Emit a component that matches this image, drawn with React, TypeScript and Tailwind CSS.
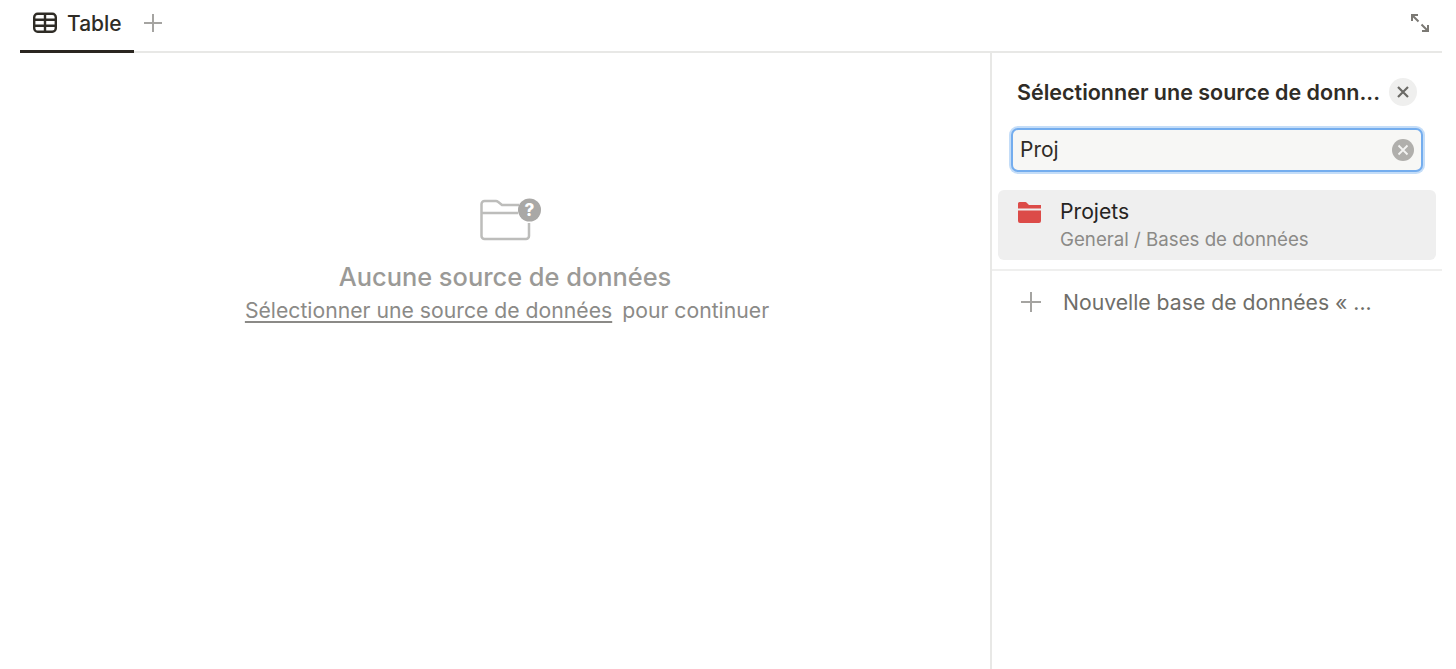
export default function App() {
  return (
    <div className="h-[669px] w-[1456px] overflow-hidden bg-white pl-[20px] pr-[14px] font-['Inter',sans-serif] flex flex-col">
      <div className="h-[53px] shrink-0 flex justify-between border-b-2 border-[#e8e8e6]">
        <div className="flex h-[53px] items-start">
          <div className="h-[53px] w-[114px] border-b-[3px] border-[#2a2620] flex items-start pl-[13px] pt-[11px] gap-[10px]">
            <svg width="24" height="24" viewBox="0 0 24 24" fill="none" stroke="#2f2c26" strokeWidth="2.400">
              <rect x="1.200" y="2.800" width="21.600" height="18" rx="3.500" />
              <path d="M1 8.800h22M1 14.800h22M12 3v17.500" />
            </svg>
            <span className="text-[21px] leading-[25px] font-medium text-[#2f2c26]">Table</span>
          </div>
          <svg width="22" height="22" viewBox="0 0 22 22" stroke="#a5a4a1" strokeWidth="2" className="ml-[8px] mt-[12px]">
            <path d="M11 2v18M2 11h18" />
          </svg>
        </div>
        <svg width="22" height="22" viewBox="0 0 22 22" fill="none" stroke="#7b7974" strokeWidth="2" className="mt-[12px] mr-[11px]">
          <path d="M3 9V3h6M3 3l6.500 6.500M19 13v6h-6M19 19l-6.500-6.500" />
        </svg>
      </div>
      <div className="flex flex-1 min-h-0">
        <main className="w-[970px] shrink-0 flex flex-col items-center pt-[144px]">
          <svg width="62" height="46" viewBox="0 0 62 46" fill="none" className="mr-[-11px]">
            <path d="M49 26v13a3 3 0 0 1-3 3H4.500a3 3 0 0 1-3-3V7a3 3 0 0 1 3-3h11.500a3 3 0 0 1 2 .8L22 8h17M1.500 16H38" stroke="#bdbdbb" strokeWidth="2.500"/>
            <circle cx="49.500" cy="13" r="11.500" fill="#a9a8a6" />
            <text x="49.500" y="19" textAnchor="middle" fontSize="17" fontWeight="800" fill="#fff" fontFamily="Inter, sans-serif">?</text>
          </svg>
          <div className="mt-[19px] text-[25.400px] leading-[30px] font-medium text-[#9b9a97]">Aucune source de données</div>
          <div className="mt-[6px] text-[21.200px] leading-[24px] text-[#8b8a87] flex gap-[10px] ml-[4px]">
            <span className="underline underline-offset-[3px]">Sélectionner une source de données</span>
            <span>pour continuer</span>
          </div>
        </main>
        <aside className="flex-1 border-l-2 border-[#e8e8e6] flex flex-col">
          <div className="flex items-center pl-[25px] pt-[25px]">
            <span className="w-[372px] text-[21.500px] leading-[28px] font-semibold text-[#2f2c26] whitespace-nowrap overflow-hidden">Sélectionner une source de donn...</span>
            <span className="w-[28px] h-[28px] rounded-full bg-[#efefee] flex items-center justify-center">
              <svg width="14" height="14" viewBox="0 0 14 14" stroke="#6b6a66" strokeWidth="2.200"><path d="M2 2l10 10M12 2L2 12" /></svg>
            </span>
          </div>
          <div className="ml-[19px] mt-[22px] w-[412px] h-[44px] rounded-[7px] border-2 border-[#74adee] ring-2 ring-[#c4ddf8] bg-[#f7f7f5] flex items-center justify-between pl-[7px] pr-[7px]">
            <span className="text-[21px] text-[#2f2c26]">Proj</span>
            <span className="w-[22px] h-[22px] rounded-full bg-[#b0afac] flex items-center justify-center">
              <svg width="12" height="12" viewBox="0 0 12 12" stroke="#f3f3f2" strokeWidth="1.800"><path d="M1.500 1.500l9 9M10.500 1.500l-9 9" /></svg>
            </span>
          </div>
          <div className="ml-[6px] mt-[18px] w-[438px] h-[70px] rounded-[6px] bg-[#efefef] flex items-start pl-[20px] pt-[7px]">
            <svg width="23" height="22" viewBox="0 0 23 22" className="mt-[5px]">
              <path d="M0 1.500A1.500 1.500 0 0 1 1.500 0h6a1.500 1.500 0 0 1 1 .5L11 3h12v3.500H0zM0 8.500h23V19a2 2 0 0 1-2 2H2a2 2 0 0 1-2-2z" fill="#dc4b48" />
            </svg>
            <div className="ml-[19px]">
              <div className="text-[21.200px] leading-[28px] text-[#26241f]">Projets</div>
              <div className="mt-[2px] text-[18.700px] leading-[26px] text-[#8b8a87]">General / Bases de données</div>
            </div>
          </div>
          <div className="mt-[9px] border-t-2 border-[#efefee]" />
          <div className="flex items-center pl-[28px] pt-[19px]">
            <svg width="22" height="22" viewBox="0 0 22 22" stroke="#a5a4a1" strokeWidth="2"><path d="M11 1v20M1 11h20" /></svg>
            <span className="ml-[21px] text-[21.200px] leading-[24px] text-[#6f6e69]">Nouvelle base de données « ...</span>
          </div>
        </aside>
      </div>
    </div>
  );
}
